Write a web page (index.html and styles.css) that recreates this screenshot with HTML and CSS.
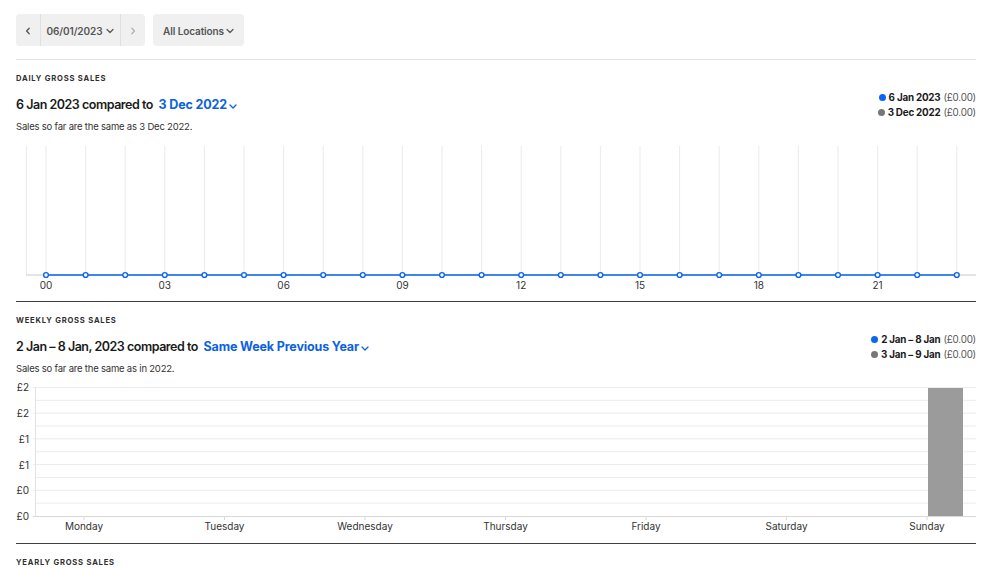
FILE: index.html
```html
<!DOCTYPE html>
<html lang="en">
<head>
<meta charset="utf-8">
<title>Sales Overview</title>
<link rel="stylesheet" href="styles.css">
</head>
<body>
<div class="page">
  <div class="toolbar">
    <div class="date-group">
      <button class="seg seg-arrow"><svg width="8" height="8" viewBox="0 0 8 8"><path d="M5.2 1.2 L2.6 4 L5.2 6.8" fill="none" stroke="#555" stroke-width="1.3" stroke-linecap="round" stroke-linejoin="round"/></svg></button>
      <button class="seg seg-date">06/01/2023 <svg class="chev" width="8" height="6" viewBox="0 0 8 6"><path d="M1 1.5 L4 4.5 L7 1.5" fill="none" stroke="#555" stroke-width="1.2" stroke-linecap="round" stroke-linejoin="round"/></svg></button>
      <button class="seg seg-arrow seg-next"><svg width="8" height="8" viewBox="0 0 8 8"><path d="M2.8 1.2 L5.4 4 L2.8 6.8" fill="none" stroke="#aaa" stroke-width="1.2" stroke-linecap="round" stroke-linejoin="round"/></svg></button>
    </div>
    <button class="loc-btn">All Locations <svg class="chev" width="8" height="6" viewBox="0 0 8 6"><path d="M1 1.5 L4 4.5 L7 1.5" fill="none" stroke="#555" stroke-width="1.2" stroke-linecap="round" stroke-linejoin="round"/></svg></button>
  </div>

  <section class="card card-first">
    <h2 class="eyebrow">DAILY GROSS SALES</h2>
    <div class="head-row">
      <div class="head-main">
        <h3 class="heading">6 Jan 2023 compared to <span class="link">3 Dec 2022<svg class="chev-blue" width="8" height="5" viewBox="0 0 8 5"><path d="M1 1 L4 4 L7 1" fill="none" stroke="#0b62e0" stroke-width="1.3" stroke-linecap="round" stroke-linejoin="round"/></svg></span></h3>
        <p class="sub">Sales so far are the same as 3 Dec 2022.</p>
      </div>
      <ul class="legend">
        <li><span class="dot dot-blue"></span><b>6 Jan 2023</b> (£0.00)</li>
        <li><span class="dot dot-gray"></span><b>3 Dec 2022</b> (£0.00)</li>
      </ul>
    </div>
    <svg class="chart" width="960" height="161" viewBox="0 0 960 161">
      <g stroke="#ebebeb" stroke-width="1">
        <line x1="10.5" y1="6" x2="10.5" y2="135"/>
        <line x1="30" y1="6" x2="30" y2="135"/>
        <line x1="69.6" y1="6" x2="69.6" y2="135"/>
        <line x1="109.2" y1="6" x2="109.2" y2="135"/>
        <line x1="148.8" y1="6" x2="148.8" y2="135"/>
        <line x1="188.4" y1="6" x2="188.4" y2="135"/>
        <line x1="228" y1="6" x2="228" y2="135"/>
        <line x1="267.6" y1="6" x2="267.6" y2="135"/>
        <line x1="307.2" y1="6" x2="307.2" y2="135"/>
        <line x1="346.8" y1="6" x2="346.8" y2="135"/>
        <line x1="386.4" y1="6" x2="386.4" y2="135"/>
        <line x1="426" y1="6" x2="426" y2="135"/>
        <line x1="465.6" y1="6" x2="465.6" y2="135"/>
        <line x1="505.2" y1="6" x2="505.2" y2="135"/>
        <line x1="544.8" y1="6" x2="544.8" y2="135"/>
        <line x1="584.4" y1="6" x2="584.4" y2="135"/>
        <line x1="624" y1="6" x2="624" y2="135"/>
        <line x1="663.6" y1="6" x2="663.6" y2="135"/>
        <line x1="703.2" y1="6" x2="703.2" y2="135"/>
        <line x1="742.8" y1="6" x2="742.8" y2="135"/>
        <line x1="782.4" y1="6" x2="782.4" y2="135"/>
        <line x1="822" y1="6" x2="822" y2="135"/>
        <line x1="861.6" y1="6" x2="861.6" y2="135"/>
        <line x1="901.2" y1="6" x2="901.2" y2="135"/>
        <line x1="940.8" y1="6" x2="940.8" y2="135"/>
      </g>
      <line x1="10" y1="135" x2="960" y2="135" stroke="#e4e4e4" stroke-width="2"/>
      <line x1="30" y1="135" x2="940.8" y2="135" stroke="#0a66f0" stroke-width="1.6"/>
      <g fill="#fff" stroke="#0a66f0" stroke-width="1.4">
        <circle cx="30" cy="135" r="2.4"/>
        <circle cx="69.6" cy="135" r="2.4"/>
        <circle cx="109.2" cy="135" r="2.4"/>
        <circle cx="148.8" cy="135" r="2.4"/>
        <circle cx="188.4" cy="135" r="2.4"/>
        <circle cx="228" cy="135" r="2.4"/>
        <circle cx="267.6" cy="135" r="2.4"/>
        <circle cx="307.2" cy="135" r="2.4"/>
        <circle cx="346.8" cy="135" r="2.4"/>
        <circle cx="386.4" cy="135" r="2.4"/>
        <circle cx="426" cy="135" r="2.4"/>
        <circle cx="465.6" cy="135" r="2.4"/>
        <circle cx="505.2" cy="135" r="2.4"/>
        <circle cx="544.8" cy="135" r="2.4"/>
        <circle cx="584.4" cy="135" r="2.4"/>
        <circle cx="624" cy="135" r="2.4"/>
        <circle cx="663.6" cy="135" r="2.4"/>
        <circle cx="703.2" cy="135" r="2.4"/>
        <circle cx="742.8" cy="135" r="2.4"/>
        <circle cx="782.4" cy="135" r="2.4"/>
        <circle cx="822" cy="135" r="2.4"/>
        <circle cx="861.6" cy="135" r="2.4"/>
        <circle cx="901.2" cy="135" r="2.4"/>
        <circle cx="940.8" cy="135" r="2.4"/>
      </g>
      <g class="axis-label" text-anchor="middle">
        <text x="30" y="149">00</text>
        <text x="148.8" y="149">03</text>
        <text x="267.6" y="149">06</text>
        <text x="386.4" y="149">09</text>
        <text x="505.2" y="149">12</text>
        <text x="624" y="149">15</text>
        <text x="742.8" y="149">18</text>
        <text x="861.6" y="149">21</text>
      </g>
    </svg>
  </section>

  <section class="card">
    <h2 class="eyebrow">WEEKLY GROSS SALES</h2>
    <div class="head-row">
      <div class="head-main">
        <h3 class="heading">2 Jan – 8 Jan, 2023 compared to <span class="link">Same Week Previous Year<svg class="chev-blue" width="8" height="5" viewBox="0 0 8 5"><path d="M1 1 L4 4 L7 1" fill="none" stroke="#0b62e0" stroke-width="1.3" stroke-linecap="round" stroke-linejoin="round"/></svg></span></h3>
        <p class="sub">Sales so far are the same as in 2022.</p>
      </div>
      <ul class="legend">
        <li><span class="dot dot-blue"></span><b>2 Jan – 8 Jan</b> (£0.00)</li>
        <li><span class="dot dot-gray"></span><b>3 Jan – 9 Jan</b> (£0.00)</li>
      </ul>
    </div>
    <svg class="chart" width="960" height="161" viewBox="0 0 960 161">
      <g stroke="#ececec" stroke-width="1">
        <line x1="17" y1="5.5" x2="960" y2="5.5"/>
        <line x1="19" y1="18.35" x2="960" y2="18.35"/>
        <line x1="17" y1="31.2" x2="960" y2="31.2"/>
        <line x1="19" y1="44.05" x2="960" y2="44.05"/>
        <line x1="17" y1="56.9" x2="960" y2="56.9"/>
        <line x1="19" y1="69.75" x2="960" y2="69.75"/>
        <line x1="17" y1="82.6" x2="960" y2="82.6"/>
        <line x1="19" y1="95.45" x2="960" y2="95.45"/>
        <line x1="17" y1="108.3" x2="960" y2="108.3"/>
        <line x1="19" y1="121.15" x2="960" y2="121.15"/>
      </g>
      <line x1="19.5" y1="5.5" x2="19.5" y2="134" stroke="#e2e2e2" stroke-width="1"/>
      <line x1="17" y1="134.5" x2="960" y2="134.5" stroke="#d8d8d8" stroke-width="1"/>
      <rect x="912" y="6" width="35" height="128" fill="#9b9b9b"/>
      <g stroke="#d8d8d8" stroke-width="1">
        <line x1="68" y1="134" x2="68" y2="138"/>
        <line x1="208.5" y1="134" x2="208.5" y2="138"/>
        <line x1="349" y1="134" x2="349" y2="138"/>
        <line x1="489.5" y1="134" x2="489.5" y2="138"/>
        <line x1="630" y1="134" x2="630" y2="138"/>
        <line x1="770.5" y1="134" x2="770.5" y2="138"/>
        <line x1="911" y1="134" x2="911" y2="138"/>
      </g>
      <g class="axis-label" text-anchor="end">
        <text x="13" y="9">£2</text>
        <text x="13" y="35">£2</text>
        <text x="13" y="60.5">£1</text>
        <text x="13" y="86.5">£1</text>
        <text x="13" y="112">£0</text>
        <text x="13" y="137.5">£0</text>
      </g>
      <g class="axis-label" text-anchor="middle">
        <text x="68" y="148">Monday</text>
        <text x="208.5" y="148">Tuesday</text>
        <text x="349" y="148">Wednesday</text>
        <text x="489.5" y="148">Thursday</text>
        <text x="630" y="148">Friday</text>
        <text x="770.5" y="148">Saturday</text>
        <text x="911" y="148">Sunday</text>
      </g>
    </svg>
  </section>

  <section class="card">
    <h2 class="eyebrow">YEARLY GROSS SALES</h2>
  </section>
</div>
</body>
</html>
```

FILE: styles.css
```css
* { box-sizing: border-box; }

html, body {
  margin: 0;
  padding: 0;
  background: #fff;
}

body {
  font-family: Inter, "Noto Sans", "Liberation Sans", sans-serif;
  color: #1a1a1a;
  overflow: hidden;
}

.page {
  padding: 14px 22px 0 16px;
}

.toolbar {
  display: flex;
  gap: 8px;
  height: 32px;
}

.date-group {
  display: flex;
  height: 32px;
  background: #f0f0f0;
  border-radius: 4px;
}

.seg, .loc-btn {
  font-family: inherit;
  border: 0;
  background: transparent;
  padding: 0;
  margin: 0;
  height: 32px;
  display: flex;
  align-items: center;
  justify-content: center;
  font-size: 10px;
  font-weight: 600;
  letter-spacing: -0.1px;
  color: #555;
  padding-top: 1px;
}

.seg-arrow {
  width: 24px;
}

.seg-date {
  width: 81px;
  gap: 4px;
  border-left: 1px solid #e0e0e0;
  border-right: 1px solid #e0e0e0;
}

.seg-next {
  width: 24px;
}

.loc-btn {
  background: #f0f0f0;
  border-radius: 4px;
  width: 91px;
  gap: 2px;
}

.chev { display: block; }

.card {
  border-top: 1px solid #3f3f3f;
  padding-top: 12px;
}

.card-first {
  margin-top: 13px;
  border-top-color: #e2e2e2;
}

.eyebrow {
  margin: 0;
  font-size: 7.6px;
  line-height: 13px;
  font-weight: 700;
  letter-spacing: 0.8px;
  color: #2f2f2f;
}

.head-row {
  display: flex;
  justify-content: space-between;
  align-items: flex-start;
  margin-top: 11px;
}

.heading {
  margin: 0;
  font-size: 12.5px;
  line-height: 18px;
  font-weight: 600;
  color: #1a1a1a;
  letter-spacing: -0.48px;
}

.link {
  color: #0b62e0;
  font-weight: 700;
  letter-spacing: -0.15px;
  margin-left: 3px;
  display: inline-flex;
  align-items: center;
  gap: 2px;
}

.chev-blue { display: block; margin-top: 3px; }

.sub {
  margin: 6px 0 0;
  font-size: 9.5px;
  line-height: 14px;
  color: #333;
  letter-spacing: -0.2px;
}

.legend {
  list-style: none;
  margin: -6px 0 0;
  padding: 0;
  font-size: 9.8px;
  line-height: 15px;
  color: #555;
  text-align: right;
  letter-spacing: -0.2px;
}

.legend li {
  display: flex;
  align-items: center;
  justify-content: flex-end;
  gap: 3px;
}

.legend b {
  color: #1a1a1a;
  font-weight: 700;
}

.dot {
  width: 7px;
  height: 7px;
  border-radius: 50%;
  display: inline-block;
}

.dot-blue { background: #0a66f0; }
.dot-gray { background: #777; }

.chart {
  display: block;
  margin-top: 6px;
}

.axis-label {
  font-family: Inter, "Noto Sans", "Liberation Sans", sans-serif;
  font-size: 10px;
  fill: #333;
}
```
